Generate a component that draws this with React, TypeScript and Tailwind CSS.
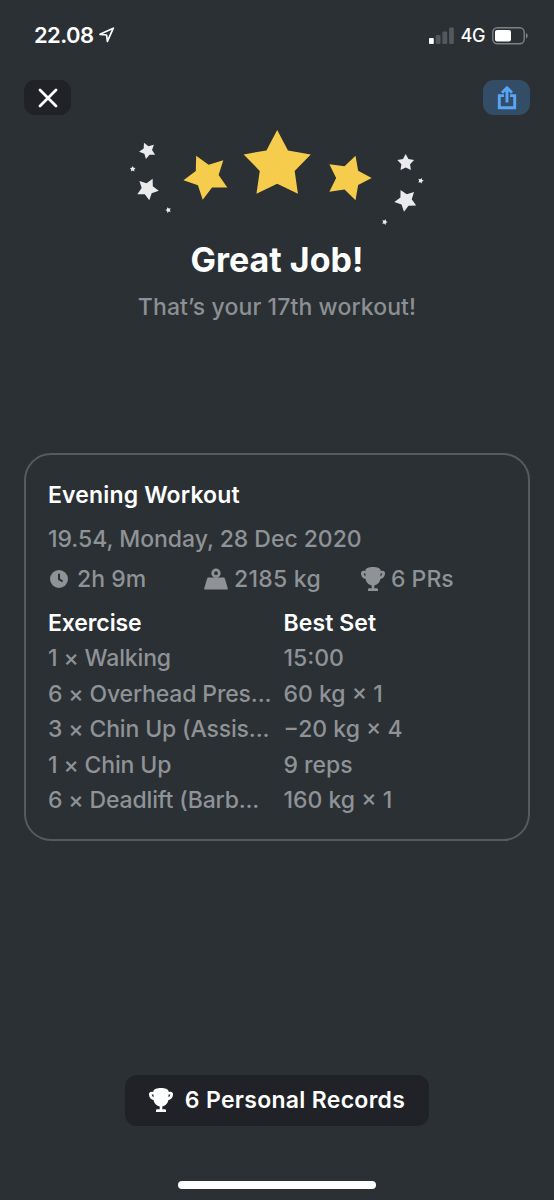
import React from 'react';

type StarProps = { cx: number; cy: number; r: number; rotate?: number };

const goldStars: StarProps[] = [
  { cx: 206.6, cy: 176.7, r: 23.4, rotate: -26.5 },
  { cx: 277.2, cy: 165.3, r: 35.3 },
  { cx: 348.3, cy: 177.9, r: 23.4, rotate: 90 },
];

const whiteStars: StarProps[] = [
  { cx: 147.6, cy: 150.6, r: 8.6, rotate: -25 },
  { cx: 132.7, cy: 169, r: 3 },
  { cx: 147.5, cy: 189, r: 11.4, rotate: 27 },
  { cx: 168.3, cy: 210, r: 3, rotate: -20 },
  { cx: 405.7, cy: 162.8, r: 8.8 },
  { cx: 420.7, cy: 180.7, r: 3, rotate: 20 },
  { cx: 405.8, cy: 200.3, r: 11.6, rotate: -27 },
  { cx: 384.7, cy: 222, r: 3, rotate: 20 },
];

const exercises = [
  { name: '1 × Walking', best: '15:00' },
  { name: '6 × Overhead Pres...', best: '60 kg × 1' },
  { name: '3 × Chin Up (Assis...', best: '−20 kg × 4' },
  { name: '1 × Chin Up', best: '9 reps' },
  { name: '6 × Deadlift (Barb...', best: '160 kg × 1' },
];

const Star = ({ cx, cy, r, rotate = 0 }: StarProps) => {
  const points = Array.from({ length: 10 }, (_, i) => {
    const radius = i % 2 === 0 ? r : r * 0.52;
    const angle = ((i * 36 + rotate) * Math.PI) / 180;
    return `${cx + radius * Math.sin(angle)},${cy - radius * Math.cos(angle)}`;
  }).join(' ');
  return <polygon points={points} />;
};

const Trophy = ({ className }: { className?: string }) => (
  <svg viewBox="0 0 24 24" className={className} fill="currentColor">
    <path d="M4.500 3C4.800.9 8 0 12 0s7.200.9 7.500 3v7.500c0 4.200-2.700 7.100-6.200 7.900v2.800h2.200c1 0 1.500.5 1.500 1.200V24H7v-1.600c0-.7.500-1.200 1.500-1.200h2.200v-2.800c-3.500-.8-6.200-3.700-6.200-7.900Z" />
    <path
      d="M5.500 5.200H2.600c-1 0-1.300.6-1.200 1.600.3 2.500 1.900 3.700 4.600 4M18.500 5.200h2.900c1 0 1.300.6 1.200 1.600-.3 2.500-1.900 3.700-4.600 4"
      fill="none"
      stroke="currentColor"
      strokeWidth="2.800"
    />
  </svg>
);

const StatusBar = () => (
  <div className="flex h-[70px] items-center justify-between pl-[34px] pr-[26px]">
    <div className="flex items-center gap-1.5">
      <span className="text-[22px] font-semibold leading-[30px] tracking-[-0.6px]">22.08</span>
      <svg width="16" height="16" viewBox="0 0 16 16" fill="none" stroke="currentColor" strokeWidth="1.700" strokeLinejoin="round">
        <path d="M1 7.300 14.300 1.200 8.400 14.400 7.600 8Z" />
      </svg>
    </div>
    <div className="flex items-center pt-px">
      <svg width="25" height="17" viewBox="0 0 25 17" fill="#52585b">
        <rect x="0" y="11" width="4.800" height="6" rx="1" fill="#fff" />
        <rect x="6.700" y="8" width="4.800" height="9" rx="1" />
        <rect x="13.400" y="4.500" width="4.800" height="12.500" rx="1" />
        <rect x="20.100" y="0.500" width="4.800" height="16.500" rx="1" />
      </svg>
      <span className="ml-[7px] text-[18px] font-medium leading-[30px] tracking-[-0.4px]">4G</span>
      <svg className="ml-[7px]" width="36" height="18" viewBox="0 0 36 18">
        <rect x="0.800" y="0.800" width="31.400" height="16" rx="4.500" fill="none" stroke="#7d8284" strokeWidth="1.400" />
        <rect x="3" y="3" width="16" height="11.600" rx="2" fill="#fff" />
        <path d="M34 6v5.500c1.100-.4 1.700-1.300 1.700-2.700S35.100 6.400 34 6Z" fill="#7d8284" />
      </svg>
    </div>
  </div>
);

const App = () => {
  return (
    <div className="relative flex h-[1200px] w-[554px] flex-col overflow-hidden bg-[#2a3033] font-['Inter','Liberation_Sans',sans-serif] text-white">
      <StatusBar />

      <div className="flex justify-between px-6 pt-[10px]">
        <button className="flex h-[35px] w-[47px] items-center justify-center rounded-[11px] bg-[#202227]">
          <svg width="20" height="20" viewBox="0 0 20 20" fill="none" stroke="currentColor" strokeWidth="2.800" strokeLinecap="round">
            <path d="M2 2l16 16M18 2L2 18" />
          </svg>
        </button>
        <button className="flex h-[35px] w-[47px] items-center justify-center rounded-[11px] bg-[#344d66] text-[#58a5f7]">
          <svg width="20" height="25" viewBox="0 0 20 25" fill="none" stroke="currentColor" strokeWidth="2.900">
            <path d="M7 10.600H2.300v12.200h15.400V10.600H13M10 17.500V3M5 7.700 10 2.700 15 7.700" />
          </svg>
        </button>
      </div>

      {/* Stars */}
      <svg width="554" height="110" viewBox="0 120 554 110" className="mt-[5px] shrink-0">
        <g fill="#f5cc4c">
          {goldStars.map((star) => <Star key={star.cx} {...star} />)}
        </g>
        <g fill="#ebebed">
          {whiteStars.map((star) => <Star key={star.cx} {...star} />)}
        </g>
      </svg>

      <h1 className="mt-[9px] text-center text-[34px] font-bold leading-[42px]">Great Job!</h1>
      <p className="mt-[11px] text-center text-[23px] font-[450] leading-[30px] tracking-[0.1px] text-[#8c8f93]">That’s your 17th workout!</p>

      {/* Workout summary */}
      <div className="mx-6 mt-[131px] h-[388px] rounded-[27px] border-2 border-[#555b5e] px-[22px] pt-[18px] text-[23px] font-[450] text-[#8f9296]">
        <h2 className="font-semibold leading-[44px] tracking-[0.15px] text-white">Evening Workout</h2>
        <p className="leading-[44px] tracking-[-0.04px]">19.54, Monday, 28 Dec 2020</p>
        <div className="mb-[9px] flex h-9 items-center">
          <div className="flex w-[156px] items-center pl-0.5">
            <svg width="18" height="18" viewBox="0 0 18 18">
              <circle cx="9" cy="9" r="9" fill="currentColor" />
              <path d="M9 3.800v5.400l3.600 2.300" fill="none" stroke="#2a3033" strokeWidth="2" />
            </svg>
            <span className="ml-[9px]">2h 9m</span>
          </div>
          <div className="flex w-[157px] items-center">
            <svg width="24" height="22" viewBox="0 0 24 22" fill="currentColor">
              <path d="M4.800 9.500h14.400c1 0 1.500.4 1.800 1.400L23.700 20c.3 1-.1 1.600-1 1.600H1.300c-.9 0-1.300-.6-1-1.600L3 10.900c.3-1 .8-1.400 1.800-1.400Z" />
              <circle cx="12" cy="5.200" r="3.300" fill="none" stroke="currentColor" strokeWidth="2.800" />
            </svg>
            <span className="ml-[6px] tracking-[0.25px]">2185 kg</span>
          </div>
          <div className="flex items-center">
            <Trophy className="size-6" />
            <span className="ml-[6px]">6 PRs</span>
          </div>
        </div>
        <div className="grid grid-cols-[235.5px_1fr] leading-[35.4px]">
          <span className="font-semibold tracking-[-0.1px] text-white">Exercise</span>
          <span className="font-semibold tracking-[0.1px] text-white">Best Set</span>
          {exercises.map((exercise) => (
            <React.Fragment key={exercise.name}>
              <span className="whitespace-nowrap tracking-[-0.15px]">{exercise.name}</span>
              <span className="whitespace-nowrap">{exercise.best}</span>
            </React.Fragment>
          ))}
        </div>
      </div>

      <button className="mx-auto mt-[234px] flex h-[51px] w-[304px] shrink-0 items-center justify-center rounded-xl bg-[#202227]">
        <Trophy className="mb-0.5 size-6" />
        <span className="ml-3 text-[23px] font-semibold tracking-[0.3px]">6 Personal Records</span>
      </button>

      {/* Home indicator */}
      <div className="mx-auto mt-[55px] h-2 w-[198px] shrink-0 rounded-full bg-white" />
    </div>
  );
};

export default App;
